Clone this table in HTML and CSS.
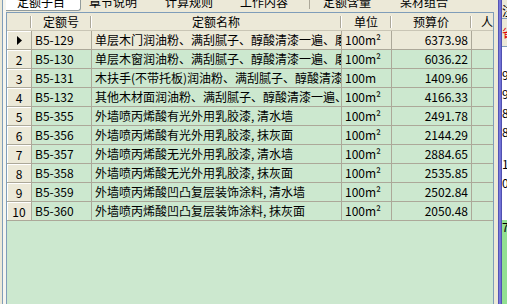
FILE: index.html
```html
<!DOCTYPE html>
<html>
<head>
<meta charset="utf-8">
<link rel="stylesheet" href="styles.css">
</head>
<body>
<div class="app">
  <div class="edge"></div>
  <div class="main">
    <div class="tabs">
      <div class="tab active"><span class="tl">定额子目</span></div>
      <div class="tab t2"><span class="tl">章节说明</span></div>
      <div class="tab t3"><span class="tl">计算规则</span></div>
      <div class="tab t4"><span class="tl">工作内容</span></div>
      <div class="tab-sep"></div>
      <div class="tab t5"><span class="tl">定额含量</span></div>
      <div class="tab t6"><span class="tl">某材组合</span></div>
    </div>
    <div class="grid">
      <div class="row head">
        <div class="h ind"><span class="hl"></span><span class="sep"></span></div>
        <div class="h code"><span class="hl">定额号</span><span class="sep"></span></div>
        <div class="h name"><span class="hl">定额名称</span><span class="sep"></span></div>
        <div class="h unit"><span class="hl">单位</span><span class="sep"></span></div>
        <div class="h price"><span class="hl">预算价</span><span class="sep"></span></div>
        <div class="h ren"><span class="hl">人</span></div>
      </div>
      <div class="row cur">
        <div class="c ind"><svg class="arrow" width="5" height="9" viewBox="0 0 5 9"><polygon points="0,0 5,4.5 0,9" fill="#000"/></svg></div>
        <div class="c code">B5-129</div>
        <div class="c name">单层木门润油粉、满刮腻子、醇酸清漆一遍、磨退出亮</div>
        <div class="c unit">100m²</div>
        <div class="c price">6373.98</div>
        <div class="c ren"></div>
      </div>
      <div class="row">
        <div class="c ind">2</div>
        <div class="c code">B5-130</div>
        <div class="c name">单层木窗润油粉、满刮腻子、醇酸清漆一遍、磨退出亮</div>
        <div class="c unit">100m²</div>
        <div class="c price">6036.22</div>
        <div class="c ren"></div>
      </div>
      <div class="row">
        <div class="c ind">3</div>
        <div class="c code">B5-131</div>
        <div class="c name">木扶手(不带托板)润油粉、满刮腻子、醇酸清漆一遍</div>
        <div class="c unit">100m</div>
        <div class="c price">1409.96</div>
        <div class="c ren"></div>
      </div>
      <div class="row">
        <div class="c ind">4</div>
        <div class="c code">B5-132</div>
        <div class="c name">其他木材面润油粉、满刮腻子、醇酸清漆一遍、磨退出亮</div>
        <div class="c unit">100m²</div>
        <div class="c price">4166.33</div>
        <div class="c ren"></div>
      </div>
      <div class="row">
        <div class="c ind">5</div>
        <div class="c code">B5-355</div>
        <div class="c name">外墙喷丙烯酸有光外用乳胶漆, 清水墙</div>
        <div class="c unit">100m²</div>
        <div class="c price">2491.78</div>
        <div class="c ren"></div>
      </div>
      <div class="row">
        <div class="c ind">6</div>
        <div class="c code">B5-356</div>
        <div class="c name">外墙喷丙烯酸有光外用乳胶漆, 抹灰面</div>
        <div class="c unit">100m²</div>
        <div class="c price">2144.29</div>
        <div class="c ren"></div>
      </div>
      <div class="row">
        <div class="c ind">7</div>
        <div class="c code">B5-357</div>
        <div class="c name">外墙喷丙烯酸无光外用乳胶漆, 清水墙</div>
        <div class="c unit">100m²</div>
        <div class="c price">2884.65</div>
        <div class="c ren"></div>
      </div>
      <div class="row">
        <div class="c ind">8</div>
        <div class="c code">B5-358</div>
        <div class="c name">外墙喷丙烯酸无光外用乳胶漆, 抹灰面</div>
        <div class="c unit">100m²</div>
        <div class="c price">2535.85</div>
        <div class="c ren"></div>
      </div>
      <div class="row">
        <div class="c ind">9</div>
        <div class="c code">B5-359</div>
        <div class="c name">外墙喷丙烯酸凹凸复层装饰涂料, 清水墙</div>
        <div class="c unit">100m²</div>
        <div class="c price">2502.84</div>
        <div class="c ren"></div>
      </div>
      <div class="row">
        <div class="c ind">10</div>
        <div class="c code">B5-360</div>
        <div class="c name">外墙喷丙烯酸凹凸复层装饰涂料, 抹灰面</div>
        <div class="c unit">100m²</div>
        <div class="c price">2050.48</div>
        <div class="c ren"></div>
      </div>
    </div>
  </div>
  <div class="gap"></div>
  <div class="splitter"></div>
  <div class="side">
    <div class="s-a">注</div>
    <div class="s-b">省</div>
    <div class="s-blank"></div>
    <div class="s-row">95</div>
    <div class="s-row">9</div>
    <div class="s-row">83</div>
    <div class="s-row">87</div>
    <div class="s-row s-gap">11</div>
    <div class="s-row">00</div>
    <div class="s-fill"></div>
    <div class="s-green">75</div>
  </div>
</div>
</body>
</html>
```

FILE: styles.css
```css
* { box-sizing: border-box; }
html, body {
  margin: 0;
  padding: 0;
  width: 507px;
  height: 304px;
  overflow: hidden;
  background: #ECE9D8;
  font-family: "Noto Sans CJK SC", "Liberation Sans", sans-serif;
  font-size: 12px;
  color: #000;
}
.app {
  display: flex;
  width: 507px;
  height: 304px;
}
.edge {
  flex: none;
  width: 6px;
  background: linear-gradient(to right, #ECE9D8 0 2px, #7F9DB9 2px 3px, #F6F5EE 3px 6px);
}
.main {
  flex: none;
  width: 488px;
  display: flex;
  flex-direction: column;
}
.tabs {
  flex: none;
  height: 12px;
  display: flex;
  overflow: hidden;
  background: #ECE9D8;
}
.tab {
  flex: none;
  height: 12px;
  white-space: nowrap;
}
.tl {
  display: block;
  margin-top: -4px;
  line-height: 12px;
}
.tab.active {
  width: 75px;
  height: 11px;
  padding-left: 11px;
  background: #fff;
  border-right: 1px solid #919B9C;
  border-bottom: 1px solid #919B9C;
  border-bottom-right-radius: 3px;
}
.t2 { width: 76px; padding-left: 8px; }
.t3 { width: 75px; padding-left: 8px; }
.t4 { width: 77px; padding-left: 8px; }
.tab-sep {
  flex: none;
  width: 1px;
  height: 9px;
  background: #ACA899;
}
.t5 { width: 77px; padding-left: 13px; }
.t6 { width: 80px; padding-left: 13px; }

.grid {
  flex: 1;
  border: 1px solid #7F9DB9;
  border-bottom: none;
  background: #CCE8CF;
  overflow: hidden;
}
.row {
  display: flex;
  height: 19px;
  border-bottom: 1px solid #ACA899;
  background: #CCE8CF;
}
.row.cur { background: #ECE9D8; }
.row.head {
  height: 18px;
  background: #ECE9D8;
  border-bottom: 1px solid #C9C5B5;
}
.c, .h { flex: none; }
.ind { width: 25px; }
.code { width: 60px; }
.name { width: 250px; }
.unit { width: 50px; }
.price { width: 80px; }
.ren { width: 30px; }

.h {
  display: flex;
  align-items: center;
  height: 17px;
}
.hl {
  flex: 1;
  text-align: center;
  line-height: 17px;
  white-space: nowrap;
}
.sep {
  flex: none;
  width: 2px;
  height: 12px;
  border-left: 1px solid #ACA899;
  border-right: 1px solid #fff;
}

.c {
  height: 18px;
  line-height: 17px;
  padding: 0 3px;
  border-right: 1px solid #ACA899;
  white-space: nowrap;
  overflow: hidden;
}
.c.ind {
  background: #ECE9D8;
  text-align: center;
  padding: 0;
  box-shadow: inset 1px 1px 0 #fff;
  display: flex;
  align-items: center;
  justify-content: center;
}
.arrow { display: block; margin-left: 1px; }
.c.price { text-align: right; }
.c.ren { border-right: none; }

.gap {
  flex: none;
  width: 4px;
  background: #ECE9D8;
}
.splitter {
  flex: none;
  width: 4px;
  background: linear-gradient(to right, #3E3E9E, #7B7BDC 35%, #6E6ED4 70%, #3C3C98);
}
.side {
  flex: none;
  width: 5px;
  display: flex;
  flex-direction: column;
  overflow: hidden;
  background: #FFFFFF;
  white-space: nowrap;
}
.s-a {
  flex: none;
  height: 19px;
  padding-top: 3px;
  line-height: 15px;
  background: #ECE9D8;
  border-bottom: 1px solid #7F9DB9;
}
.s-b {
  flex: none;
  height: 28px;
  line-height: 27px;
  color: #E00000;
  background: #ECE9D8;
  border-bottom: 1px solid #7F9DB9;
}
.s-blank { flex: none; height: 19px; }
.s-row {
  flex: none;
  height: 19px;
  line-height: 18px;
}
.s-gap { margin-top: 13px; }
.s-fill { flex: none; height: 27px; }
.s-green {
  flex: 1;
  background: #92E092;
  line-height: 14px;
}
```
